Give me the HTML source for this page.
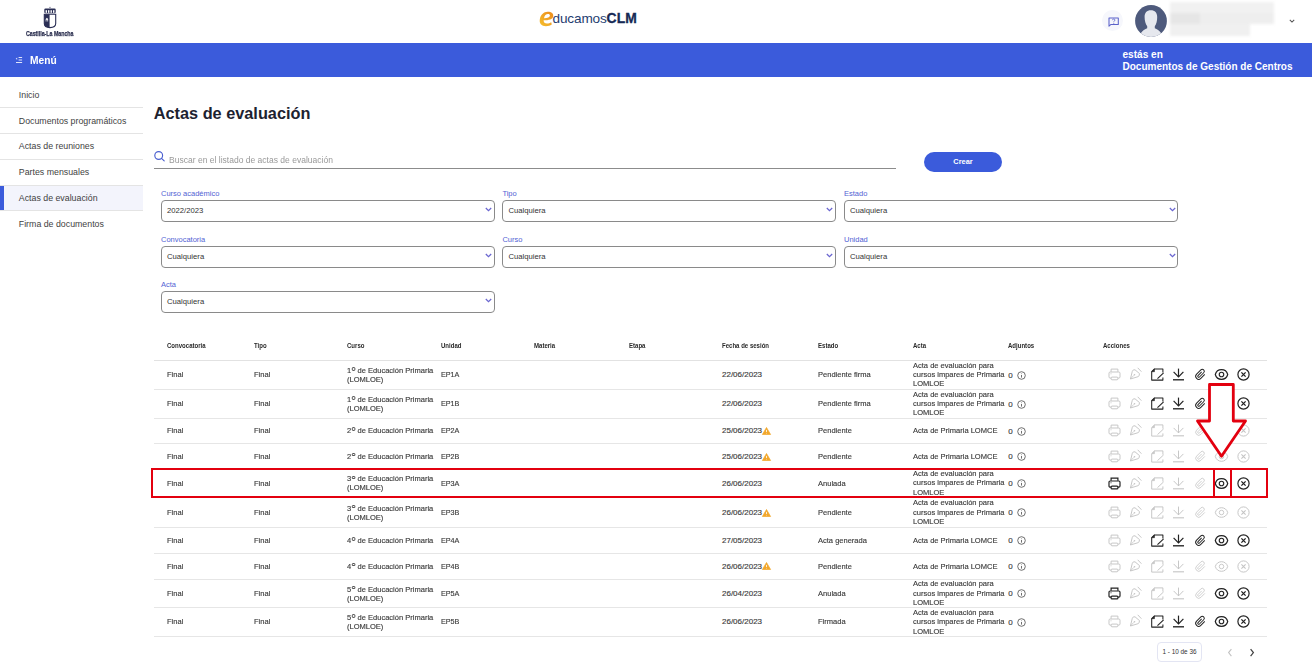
<!DOCTYPE html><html><head><meta charset="utf-8"><style>
*{box-sizing:border-box;margin:0;padding:0}
html,body{width:1312px;height:667px;overflow:hidden;background:#fff;font-family:"Liberation Sans",sans-serif;color:#333}
.t{position:absolute;white-space:nowrap;line-height:20px}
.tb{-webkit-text-stroke:0.12px currentColor}
.a{position:absolute}
svg{position:absolute;overflow:visible}
</style></head><body>
<svg style="left:43px;top:6px" width="14" height="23" viewBox="0 0 14 23">
<path d="M7 0.6 L7.6 2 L6.4 2 Z" fill="#2b2f55"/>
<rect x="1.3" y="2.6" width="11.4" height="4.6" rx="1.2" fill="#2b2f55"/>
<rect x="2.6" y="4.2" width="1.4" height="2.6" fill="#fff"/><rect x="5" y="4.2" width="1.4" height="2.6" fill="#fff"/><rect x="7.5" y="4.2" width="1.4" height="2.6" fill="#fff"/><rect x="10" y="4.2" width="1.4" height="2.6" fill="#fff"/>
<path d="M1.3 8.3 H12.7 V17.5 Q12.7 21.5 7 21.6 Q1.3 21.5 1.3 17.5 Z" fill="#fff" stroke="#2b2f55" stroke-width="1.1"/>
<path d="M1.3 8.3 H6.6 V21.6 Q1.3 21.5 1.3 17.5 Z" fill="#2b2f55"/>
<path d="M2.7 15.5 V13 L3.9 11.8 L5.1 13 V15.5 H4.4 V13.8 H3.4 V15.5 Z" fill="#fff"/>
</svg>
<div class="t" style="left:26.2px;top:23.6px;font-size:7.8px;font-weight:bold;color:#2a2e4e;transform:scaleX(0.68);transform-origin:0 50%;letter-spacing:-0.05px;-webkit-text-stroke:0.25px #2a2e4e">Castilla-La Mancha</div>
<svg style="left:537.5px;top:10.5px" width="17" height="16" viewBox="0 0 17 16">
<defs><linearGradient id="eg" x1="0" y1="1" x2="1" y2="0"><stop offset="0" stop-color="#f5c02e"/><stop offset="1" stop-color="#ec8a1c"/></linearGradient></defs>
<path fill="url(#eg)" fill-rule="evenodd" d="M9.6 0.8 C13.6 0.8 15.8 2.6 15.2 5.4 C14.6 8.2 11 9.2 5.6 9.3 C5.6 11.6 6.8 12.6 9 12.6 C10.6 12.6 12 12.1 13.2 11.3 L13.8 13.6 C12.2 14.6 10.2 15.2 8 15.2 C3.2 15.2 1.2 12.6 1.8 8.6 C2.5 3.9 5.6 0.8 9.6 0.8 Z M6 7.2 C9.8 7.1 11.6 6.2 11.9 4.8 C12.1 3.7 11.2 3.1 9.9 3.1 C8 3.1 6.6 4.6 6 7.2 Z"/>
</svg>
<div class="t" style="left:552.5px;top:8px;font-size:13.6px;color:#1f3d70;letter-spacing:-0.15px">ducamos<b style="color:#172a55;letter-spacing:0;font-size:13.9px;-webkit-text-stroke:0.3px #172a55">CLM</b></div>
<div class="a" style="left:1102px;top:10px;width:21px;height:21px;border-radius:50%;background:#f6f7fc"></div>
<svg style="left:1107.5px;top:16.5px" width="11" height="10" viewBox="0 0 11 10">
<path d="M1 1 H10.3 V7.4 H3 L1 9.2 Z" fill="none" stroke="#5b62c9" stroke-width="1.05" stroke-linejoin="round"/>
<path d="M4.4 3.2 C4.4 2.4 5 2.0 5.7 2.0 C6.4 2.0 7 2.4 7 3.1 C7 3.8 6.2 4.0 5.8 4.5 V5.1" fill="none" stroke="#5b62c9" stroke-width="0.8"/>
<circle cx="5.8" cy="6.2" r="0.5" fill="#5b62c9"/>
</svg>
<svg style="left:1134.7px;top:4.6px" width="32" height="32" viewBox="0 0 32 32">
<defs><clipPath id="av"><circle cx="16" cy="16" r="15.9"/></clipPath></defs>
<circle cx="16" cy="16" r="15.9" fill="#4e5a7c"/>
<g clip-path="url(#av)"><path d="M15.8 5.3 C11.8 5.3 9.6 8 9.6 12 C9.6 15.6 10.6 19.2 12.2 21.2 V23.2 C10.2 24 7.6 25.4 5.6 28.4 C7.4 31.4 11 33 16 33 C21 33 24.6 31.4 26.4 28.4 C24.4 25.4 21.8 24 19.8 23.2 V21.2 C21.4 19.2 22.2 15.6 22.2 12 C22.2 8 20 5.3 15.8 5.3 Z" fill="#e6e8ee"/></g>
</svg>
<div class="a" style="left:1170px;top:2px;width:105px;height:34px;filter:blur(1.5px)"><div class="a" style="left:0;top:0;width:104px;height:11px;background:#f1f1f1"></div><div class="a" style="left:0;top:11px;width:104px;height:11px;background:#eeeeee"></div><div class="a" style="left:0;top:11px;width:30px;height:11px;background:#e6e6e6"></div><div class="a" style="left:0;top:22px;width:80px;height:12px;background:#f0f0f0"></div></div>
<svg style="left:1289px;top:19px" width="6" height="4" viewBox="0 0 6 4"><path d="M0.8 0.8 L3 3 L5.2 0.8" fill="none" stroke="#555" stroke-width="1.05"/></svg>
<div class="a" style="left:0;top:43px;width:1312px;height:34px;background:#3b5bdb"></div>
<svg style="left:15px;top:56px" width="8" height="8" viewBox="0 0 8 8">
<path d="M3.6 1.4 H7.1 M3.6 3.9 H7.1 M1 6.5 H7.1" stroke="#dfe4fb" stroke-width="1.05"/>
<path d="M2.2 1.6 L0.7 2.65 L2.2 3.7 Z" fill="#dfe4fb"/>
</svg>
<div class="t" style="left:29.5px;top:50.00px;font-size:10.6px;font-weight:bold;color:#fff;transform:scaleX(0.965);transform-origin:0 50%;">Menú</div>
<div class="t" style="left:1122.5px;top:44.50px;font-size:10.1px;font-weight:bold;color:#fff;">estás en</div>
<div class="t" style="left:1122.5px;top:57.40px;font-size:10px;font-weight:bold;color:#fff;">Documentos de Gestión de Centros</div>
<div class="a" style="left:0;top:185px;width:143px;height:25.4px;background:#f3f4fc"></div>
<div class="a" style="left:0;top:185px;width:3.6px;height:25.6px;background:#3b5bdb"></div>
<div class="a" style="left:0;top:107.1px;width:143px;height:1px;background:#e4e4e4"></div>
<div class="a" style="left:0;top:133.1px;width:143px;height:1px;background:#e4e4e4"></div>
<div class="a" style="left:0;top:159.1px;width:143px;height:1px;background:#e4e4e4"></div>
<div class="a" style="left:0;top:185px;width:143px;height:1px;background:#e4e4e4"></div>
<div class="a" style="left:0;top:210.4px;width:143px;height:1px;background:#e4e4e4"></div>
<div class="t" style="left:18.8px;top:84.50px;font-size:8.8px;font-weight:normal;color:#3f3f3f;">Inicio</div>
<div class="t" style="left:18.8px;top:110.70px;font-size:8.8px;font-weight:normal;color:#3f3f3f;">Documentos programáticos</div>
<div class="t" style="left:18.8px;top:136.20px;font-size:8.8px;font-weight:normal;color:#3f3f3f;">Actas de reuniones</div>
<div class="t" style="left:18.8px;top:162.20px;font-size:8.8px;font-weight:normal;color:#3f3f3f;">Partes mensuales</div>
<div class="t" style="left:18.8px;top:187.90px;font-size:8.8px;font-weight:normal;color:#3f3f3f;">Actas de evaluación</div>
<div class="t" style="left:18.8px;top:213.90px;font-size:8.8px;font-weight:normal;color:#3f3f3f;">Firma de documentos</div>
<div class="t" style="left:153.8px;top:103.10px;font-size:16.3px;font-weight:bold;color:#1d2230;">Actas de evaluación</div>
<svg style="left:154.3px;top:150.8px" width="11" height="11" viewBox="0 0 11 11">
<circle cx="4.7" cy="4.5" r="3.9" fill="none" stroke="#4a5fd0" stroke-width="1.15"/>
<path d="M7.5 7.3 L10.2 9.9" stroke="#4a5fd0" stroke-width="1.15" stroke-linecap="round"/>
</svg>
<div class="t" style="left:168.8px;top:150.00px;font-size:9px;font-weight:normal;color:#999999;transform:scaleX(0.947);transform-origin:0 50%;">Buscar en el listado de actas de evaluación</div>
<div class="a" style="left:154px;top:168px;width:742px;height:1px;background:#8c8c8c"></div>
<div class="a" style="left:924px;top:152px;width:78px;height:19.5px;border-radius:10px;background:#3b5bdb"></div>
<div class="t" style="left:924px;width:78px;text-align:center;top:152.2px;font-size:7.4px;font-weight:bold;color:#fff">Crear</div>
<div class="t" style="left:161px;top:183.90px;font-size:7.5px;font-weight:normal;color:#5262d4;">Curso académico</div>
<div class="a" style="left:161px;top:200px;width:333.5px;height:22.0px;border:1px solid #8a8a8a;border-radius:4px"></div>
<div class="t" style="left:167px;top:201.00px;font-size:7.7px;font-weight:normal;color:#333333;">2022/2023</div>
<svg style="left:484.9px;top:207.0px" width="7" height="5" viewBox="0 0 7 5"><path d="M0.8 1 L3.5 3.6 L6.2 1" fill="none" stroke="#6a66d0" stroke-width="1.25"/></svg>
<div class="t" style="left:502.4px;top:183.90px;font-size:7.5px;font-weight:normal;color:#5262d4;">Tipo</div>
<div class="a" style="left:502.4px;top:200px;width:333.6px;height:22.0px;border:1px solid #8a8a8a;border-radius:4px"></div>
<div class="t" style="left:508.4px;top:201.00px;font-size:7.7px;font-weight:normal;color:#333333;">Cualquiera</div>
<svg style="left:826.4px;top:207.0px" width="7" height="5" viewBox="0 0 7 5"><path d="M0.8 1 L3.5 3.6 L6.2 1" fill="none" stroke="#6a66d0" stroke-width="1.25"/></svg>
<div class="t" style="left:844px;top:183.90px;font-size:7.5px;font-weight:normal;color:#5262d4;">Estado</div>
<div class="a" style="left:844px;top:200px;width:334.3px;height:22.0px;border:1px solid #8a8a8a;border-radius:4px"></div>
<div class="t" style="left:850px;top:201.00px;font-size:7.7px;font-weight:normal;color:#333333;">Cualquiera</div>
<svg style="left:1168.7px;top:207.0px" width="7" height="5" viewBox="0 0 7 5"><path d="M0.8 1 L3.5 3.6 L6.2 1" fill="none" stroke="#6a66d0" stroke-width="1.25"/></svg>
<div class="t" style="left:161px;top:229.50px;font-size:7.5px;font-weight:normal;color:#5262d4;">Convocatoria</div>
<div class="a" style="left:161px;top:246px;width:333.5px;height:22.0px;border:1px solid #8a8a8a;border-radius:4px"></div>
<div class="t" style="left:167px;top:247.00px;font-size:7.7px;font-weight:normal;color:#333333;">Cualquiera</div>
<svg style="left:484.9px;top:253.0px" width="7" height="5" viewBox="0 0 7 5"><path d="M0.8 1 L3.5 3.6 L6.2 1" fill="none" stroke="#6a66d0" stroke-width="1.25"/></svg>
<div class="t" style="left:502.4px;top:229.50px;font-size:7.5px;font-weight:normal;color:#5262d4;">Curso</div>
<div class="a" style="left:502.4px;top:246px;width:333.6px;height:22.0px;border:1px solid #8a8a8a;border-radius:4px"></div>
<div class="t" style="left:508.4px;top:247.00px;font-size:7.7px;font-weight:normal;color:#333333;">Cualquiera</div>
<svg style="left:826.4px;top:253.0px" width="7" height="5" viewBox="0 0 7 5"><path d="M0.8 1 L3.5 3.6 L6.2 1" fill="none" stroke="#6a66d0" stroke-width="1.25"/></svg>
<div class="t" style="left:844px;top:229.50px;font-size:7.5px;font-weight:normal;color:#5262d4;">Unidad</div>
<div class="a" style="left:844px;top:246px;width:334.3px;height:22.0px;border:1px solid #8a8a8a;border-radius:4px"></div>
<div class="t" style="left:850px;top:247.00px;font-size:7.7px;font-weight:normal;color:#333333;">Cualquiera</div>
<svg style="left:1168.7px;top:253.0px" width="7" height="5" viewBox="0 0 7 5"><path d="M0.8 1 L3.5 3.6 L6.2 1" fill="none" stroke="#6a66d0" stroke-width="1.25"/></svg>
<div class="t" style="left:161px;top:274.60px;font-size:7.5px;font-weight:normal;color:#5262d4;">Acta</div>
<div class="a" style="left:161px;top:291px;width:333.5px;height:22.0px;border:1px solid #8a8a8a;border-radius:4px"></div>
<div class="t" style="left:167px;top:292.00px;font-size:7.7px;font-weight:normal;color:#333333;">Cualquiera</div>
<svg style="left:484.9px;top:298.0px" width="7" height="5" viewBox="0 0 7 5"><path d="M0.8 1 L3.5 3.6 L6.2 1" fill="none" stroke="#6a66d0" stroke-width="1.25"/></svg>
<div class="t" style="left:166.5px;top:336.10px;font-size:6.5px;font-weight:bold;color:#2a2a2a;transform:scaleX(0.93);transform-origin:0 50%;">Convocatoria</div>
<div class="t" style="left:254px;top:336.10px;font-size:6.5px;font-weight:bold;color:#2a2a2a;transform:scaleX(0.93);transform-origin:0 50%;">Tipo</div>
<div class="t" style="left:346.6px;top:336.10px;font-size:6.5px;font-weight:bold;color:#2a2a2a;transform:scaleX(0.93);transform-origin:0 50%;">Curso</div>
<div class="t" style="left:441.3px;top:336.10px;font-size:6.5px;font-weight:bold;color:#2a2a2a;transform:scaleX(0.93);transform-origin:0 50%;">Unidad</div>
<div class="t" style="left:534px;top:336.10px;font-size:6.5px;font-weight:bold;color:#2a2a2a;transform:scaleX(0.93);transform-origin:0 50%;">Materia</div>
<div class="t" style="left:629.3px;top:336.10px;font-size:6.5px;font-weight:bold;color:#2a2a2a;transform:scaleX(0.93);transform-origin:0 50%;">Etapa</div>
<div class="t" style="left:722px;top:336.10px;font-size:6.5px;font-weight:bold;color:#2a2a2a;transform:scaleX(0.93);transform-origin:0 50%;">Fecha de sesión</div>
<div class="t" style="left:818px;top:336.10px;font-size:6.5px;font-weight:bold;color:#2a2a2a;transform:scaleX(0.93);transform-origin:0 50%;">Estado</div>
<div class="t" style="left:912.7px;top:336.10px;font-size:6.5px;font-weight:bold;color:#2a2a2a;transform:scaleX(0.93);transform-origin:0 50%;">Acta</div>
<div class="t" style="left:1008px;top:336.10px;font-size:6.5px;font-weight:bold;color:#2a2a2a;transform:scaleX(0.93);transform-origin:0 50%;">Adjuntos</div>
<div class="t" style="left:1103px;top:336.10px;font-size:6.5px;font-weight:bold;color:#2a2a2a;transform:scaleX(0.93);transform-origin:0 50%;">Acciones</div>
<div class="a" style="left:154px;top:360px;width:1113px;height:1px;background:#e2e2e2"></div>
<div class="a" style="left:154px;top:389.2px;width:1113px;height:1px;background:#e6e6e6"></div>
<div class="t" style="left:166.5px;top:365.20px;font-size:8px;font-weight:normal;color:#3c3c3c;transform:scaleX(0.94);transform-origin:0 50%;-webkit-text-stroke:0.15px #3c3c3c;">Final</div>
<div class="t" style="left:254px;top:365.20px;font-size:8px;font-weight:normal;color:#3c3c3c;transform:scaleX(0.94);transform-origin:0 50%;-webkit-text-stroke:0.15px #3c3c3c;">Final</div>
<div class="t" style="left:346.6px;top:366.0px;line-height:9.1px;font-size:8px;color:#3c3c3c;-webkit-text-stroke:0.15px #3c3c3c;transform:scaleX(0.94);transform-origin:0 50%">1<span style="display:inline-block;width:3.9px;height:3.6px;border:0.8px solid #555;border-radius:50%;vertical-align:2.3px;margin:0 0.2px 0 0.5px"></span> de Educación Primaria<br>(LOMLOE)</div>
<div class="t" style="left:441.3px;top:365.20px;font-size:8px;font-weight:normal;color:#3c3c3c;transform:scaleX(0.9);transform-origin:0 50%;-webkit-text-stroke:0.15px #3c3c3c;">EP1A</div>
<div class="t" style="left:722px;top:365.20px;font-size:8px;font-weight:normal;color:#3c3c3c;-webkit-text-stroke:0.15px #3c3c3c;">22/06/2023</div>
<div class="t" style="left:818px;top:365.20px;font-size:8px;font-weight:normal;color:#3c3c3c;transform:scaleX(0.94);transform-origin:0 50%;-webkit-text-stroke:0.15px #3c3c3c;">Pendiente firma</div>
<div class="t" style="left:913px;top:360.8px;line-height:9.3px;font-size:8px;color:#3c3c3c;-webkit-text-stroke:0.15px #3c3c3c;transform:scaleX(0.94);transform-origin:0 50%">Acta de evaluación para<br>cursos impares de Primaria<br>LOMLOE</div>
<div class="t" style="left:1008.3px;top:365.50px;font-size:8px;font-weight:normal;color:#3c3c3c;-webkit-text-stroke:0.15px #3c3c3c;">0</div>
<svg style="left:1016.9px;top:370.6px" width="9" height="9" viewBox="0 0 9 9"><circle cx="4.5" cy="4.5" r="3.8" fill="none" stroke="#555" stroke-width="0.85"/><path d="M4.5 3.9 V6.6" stroke="#555" stroke-width="0.85"/><circle cx="4.5" cy="2.6" r="0.45" fill="#555"/></svg>
<svg style="left:1107.50px;top:368.10px" width="13" height="13" viewBox="0 0 13 13"><path d="M3.1 3.8 V1.1 H9.9 V3.8" fill="none" stroke="#c4c4c4" stroke-width="0.95"/><rect x="1" y="4" width="11" height="6.1" rx="1.2" fill="none" stroke="#c4c4c4" stroke-width="0.95"/><rect x="3.1" y="9.1" width="6.8" height="2.7" rx="0.9" fill="#fff" stroke="#c4c4c4" stroke-width="0.95"/><circle cx="3" cy="5.8" r="0.55" fill="#c4c4c4"/></svg>
<svg style="left:1129.40px;top:368.10px" width="13" height="13" viewBox="0 0 13 13"><path d="M1.4 11 L3.3 3.3 Q3.6 2.1 4.8 1.9 L6 1.8 L10.5 5.6 L10.2 7.4 Q10 8.2 9 8.7 Z" fill="none" stroke="#c4c4c4" stroke-width="0.95" stroke-linejoin="round"/><path d="M1.6 10.8 L4.9 7.3" stroke="#c4c4c4" stroke-width="0.76"/><circle cx="5.5" cy="6.7" r="0.8" fill="#c4c4c4"/><path d="M8.7 -0.2 L12.4 3.7" stroke="#c4c4c4" stroke-width="0.95"/></svg>
<svg style="left:1151.20px;top:368.10px" width="13" height="13" viewBox="0 0 13 13"><path d="M11.9 4.6 V0.9 H3.5 L0.7 3.7 V12.1 H11.9 V9.4" fill="none" stroke="#222" stroke-width="1.05" stroke-linejoin="round"/><path d="M0.7 3.7 L3.5 0.9 V3.7 Z" fill="#222" stroke="#222" stroke-width="0.5"/><path d="M6.5 10.6 L12.6 4.9" stroke="#222" stroke-width="1.05"/></svg>
<svg style="left:1172.00px;top:368.10px" width="13" height="13" viewBox="0 0 13 13"><path d="M6.5 0.6 V9" stroke="#222" stroke-width="1.2"/><path d="M1.6 3.9 L6.5 8.9 L11.4 3.9" fill="none" stroke="#222" stroke-width="1.2"/><path d="M1 11.8 H12" stroke="#222" stroke-width="1.3499999999999999"/></svg>
<svg style="left:1193.50px;top:368.10px" width="13" height="13" viewBox="0 0 13 13"><g transform="rotate(45 6.5 6.5)"><path d="M9.5 3.8 V9 A3 3 0 0 1 3.5 9 V3 A2 2 0 0 1 7.5 3 V9 A1 1 0 0 1 5.5 9 V4.2" fill="none" stroke="#222" stroke-width="0.96" stroke-linecap="round"/></g></svg>
<svg style="left:1215.05px;top:368.10px" width="13" height="13" viewBox="0 0 13 13"><path d="M0.3 6.5 C2 0.1 11 0.1 12.7 6.5 C11 12.9 2 12.9 0.3 6.5 Z" fill="none" stroke="#222" stroke-width="1.2"/><circle cx="6.5" cy="6.5" r="2.25" fill="none" stroke="#222" stroke-width="1.14"/></svg>
<svg style="left:1236.80px;top:368.10px" width="13" height="13" viewBox="0 0 13 13"><circle cx="6.5" cy="6.5" r="5.6" fill="none" stroke="#222" stroke-width="1.2"/><path d="M4.4 4.4 L8.6 8.6 M8.6 4.4 L4.4 8.6" stroke="#222" stroke-width="1.3"/></svg>
<div class="a" style="left:154px;top:418.0px;width:1113px;height:1px;background:#e6e6e6"></div>
<div class="t" style="left:166.5px;top:394.20px;font-size:8px;font-weight:normal;color:#3c3c3c;transform:scaleX(0.94);transform-origin:0 50%;-webkit-text-stroke:0.15px #3c3c3c;">Final</div>
<div class="t" style="left:254px;top:394.20px;font-size:8px;font-weight:normal;color:#3c3c3c;transform:scaleX(0.94);transform-origin:0 50%;-webkit-text-stroke:0.15px #3c3c3c;">Final</div>
<div class="t" style="left:346.6px;top:395.0px;line-height:9.1px;font-size:8px;color:#3c3c3c;-webkit-text-stroke:0.15px #3c3c3c;transform:scaleX(0.94);transform-origin:0 50%">1<span style="display:inline-block;width:3.9px;height:3.6px;border:0.8px solid #555;border-radius:50%;vertical-align:2.3px;margin:0 0.2px 0 0.5px"></span> de Educación Primaria<br>(LOMLOE)</div>
<div class="t" style="left:441.3px;top:394.20px;font-size:8px;font-weight:normal;color:#3c3c3c;transform:scaleX(0.9);transform-origin:0 50%;-webkit-text-stroke:0.15px #3c3c3c;">EP1B</div>
<div class="t" style="left:722px;top:394.20px;font-size:8px;font-weight:normal;color:#3c3c3c;-webkit-text-stroke:0.15px #3c3c3c;">22/06/2023</div>
<div class="t" style="left:818px;top:394.20px;font-size:8px;font-weight:normal;color:#3c3c3c;transform:scaleX(0.94);transform-origin:0 50%;-webkit-text-stroke:0.15px #3c3c3c;">Pendiente firma</div>
<div class="t" style="left:913px;top:389.8px;line-height:9.3px;font-size:8px;color:#3c3c3c;-webkit-text-stroke:0.15px #3c3c3c;transform:scaleX(0.94);transform-origin:0 50%">Acta de evaluación para<br>cursos impares de Primaria<br>LOMLOE</div>
<div class="t" style="left:1008.3px;top:394.50px;font-size:8px;font-weight:normal;color:#3c3c3c;-webkit-text-stroke:0.15px #3c3c3c;">0</div>
<svg style="left:1016.9px;top:399.6px" width="9" height="9" viewBox="0 0 9 9"><circle cx="4.5" cy="4.5" r="3.8" fill="none" stroke="#555" stroke-width="0.85"/><path d="M4.5 3.9 V6.6" stroke="#555" stroke-width="0.85"/><circle cx="4.5" cy="2.6" r="0.45" fill="#555"/></svg>
<svg style="left:1107.50px;top:397.10px" width="13" height="13" viewBox="0 0 13 13"><path d="M3.1 3.8 V1.1 H9.9 V3.8" fill="none" stroke="#c4c4c4" stroke-width="0.95"/><rect x="1" y="4" width="11" height="6.1" rx="1.2" fill="none" stroke="#c4c4c4" stroke-width="0.95"/><rect x="3.1" y="9.1" width="6.8" height="2.7" rx="0.9" fill="#fff" stroke="#c4c4c4" stroke-width="0.95"/><circle cx="3" cy="5.8" r="0.55" fill="#c4c4c4"/></svg>
<svg style="left:1129.40px;top:397.10px" width="13" height="13" viewBox="0 0 13 13"><path d="M1.4 11 L3.3 3.3 Q3.6 2.1 4.8 1.9 L6 1.8 L10.5 5.6 L10.2 7.4 Q10 8.2 9 8.7 Z" fill="none" stroke="#c4c4c4" stroke-width="0.95" stroke-linejoin="round"/><path d="M1.6 10.8 L4.9 7.3" stroke="#c4c4c4" stroke-width="0.76"/><circle cx="5.5" cy="6.7" r="0.8" fill="#c4c4c4"/><path d="M8.7 -0.2 L12.4 3.7" stroke="#c4c4c4" stroke-width="0.95"/></svg>
<svg style="left:1151.20px;top:397.10px" width="13" height="13" viewBox="0 0 13 13"><path d="M11.9 4.6 V0.9 H3.5 L0.7 3.7 V12.1 H11.9 V9.4" fill="none" stroke="#222" stroke-width="1.05" stroke-linejoin="round"/><path d="M0.7 3.7 L3.5 0.9 V3.7 Z" fill="#222" stroke="#222" stroke-width="0.5"/><path d="M6.5 10.6 L12.6 4.9" stroke="#222" stroke-width="1.05"/></svg>
<svg style="left:1172.00px;top:397.10px" width="13" height="13" viewBox="0 0 13 13"><path d="M6.5 0.6 V9" stroke="#222" stroke-width="1.2"/><path d="M1.6 3.9 L6.5 8.9 L11.4 3.9" fill="none" stroke="#222" stroke-width="1.2"/><path d="M1 11.8 H12" stroke="#222" stroke-width="1.3499999999999999"/></svg>
<svg style="left:1193.50px;top:397.10px" width="13" height="13" viewBox="0 0 13 13"><g transform="rotate(45 6.5 6.5)"><path d="M9.5 3.8 V9 A3 3 0 0 1 3.5 9 V3 A2 2 0 0 1 7.5 3 V9 A1 1 0 0 1 5.5 9 V4.2" fill="none" stroke="#222" stroke-width="0.96" stroke-linecap="round"/></g></svg>
<svg style="left:1215.05px;top:397.10px" width="13" height="13" viewBox="0 0 13 13"><path d="M0.3 6.5 C2 0.1 11 0.1 12.7 6.5 C11 12.9 2 12.9 0.3 6.5 Z" fill="none" stroke="#222" stroke-width="1.2"/><circle cx="6.5" cy="6.5" r="2.25" fill="none" stroke="#222" stroke-width="1.14"/></svg>
<svg style="left:1236.80px;top:397.10px" width="13" height="13" viewBox="0 0 13 13"><circle cx="6.5" cy="6.5" r="5.6" fill="none" stroke="#222" stroke-width="1.2"/><path d="M4.4 4.4 L8.6 8.6 M8.6 4.4 L4.4 8.6" stroke="#222" stroke-width="1.3"/></svg>
<div class="a" style="left:154px;top:443.4px;width:1113px;height:1px;background:#e6e6e6"></div>
<div class="t" style="left:166.5px;top:421.30px;font-size:8px;font-weight:normal;color:#3c3c3c;transform:scaleX(0.94);transform-origin:0 50%;-webkit-text-stroke:0.15px #3c3c3c;">Final</div>
<div class="t" style="left:254px;top:421.30px;font-size:8px;font-weight:normal;color:#3c3c3c;transform:scaleX(0.94);transform-origin:0 50%;-webkit-text-stroke:0.15px #3c3c3c;">Final</div>
<div class="t" style="left:346.6px;top:421.30px;font-size:8px;font-weight:normal;color:#3c3c3c;transform:scaleX(0.94);transform-origin:0 50%;-webkit-text-stroke:0.15px #3c3c3c;">2<span style="display:inline-block;width:3.9px;height:3.6px;border:0.8px solid #555;border-radius:50%;vertical-align:2.3px;margin:0 0.2px 0 0.5px"></span> de Educación Primaria</div>
<div class="t" style="left:441.3px;top:421.30px;font-size:8px;font-weight:normal;color:#3c3c3c;transform:scaleX(0.9);transform-origin:0 50%;-webkit-text-stroke:0.15px #3c3c3c;">EP2A</div>
<div class="t" style="left:722px;top:421.30px;font-size:8px;font-weight:normal;color:#3c3c3c;-webkit-text-stroke:0.15px #3c3c3c;">25/06/2023</div>
<svg style="left:762.3px;top:427.1px" width="9" height="8" viewBox="0 0 9 8"><path d="M4.5 0.5 L8.6 7.5 H0.4 Z" fill="#f2a72b" stroke="#f2a72b" stroke-width="0.7" stroke-linejoin="round"/><path d="M4.5 2.9 V5.1" stroke="#fff" stroke-width="0.8"/><circle cx="4.5" cy="6.2" r="0.4" fill="#fff"/></svg>
<div class="t" style="left:818px;top:421.30px;font-size:8px;font-weight:normal;color:#3c3c3c;transform:scaleX(0.94);transform-origin:0 50%;-webkit-text-stroke:0.15px #3c3c3c;">Pendiente</div>
<div class="t" style="left:913px;top:421.30px;font-size:8px;font-weight:normal;color:#3c3c3c;transform:scaleX(0.94);transform-origin:0 50%;-webkit-text-stroke:0.15px #3c3c3c;">Acta de Primaria LOMCE</div>
<div class="t" style="left:1008.3px;top:421.60px;font-size:8px;font-weight:normal;color:#3c3c3c;-webkit-text-stroke:0.15px #3c3c3c;">0</div>
<svg style="left:1016.9px;top:426.7px" width="9" height="9" viewBox="0 0 9 9"><circle cx="4.5" cy="4.5" r="3.8" fill="none" stroke="#555" stroke-width="0.85"/><path d="M4.5 3.9 V6.6" stroke="#555" stroke-width="0.85"/><circle cx="4.5" cy="2.6" r="0.45" fill="#555"/></svg>
<svg style="left:1107.50px;top:424.20px" width="13" height="13" viewBox="0 0 13 13"><path d="M3.1 3.8 V1.1 H9.9 V3.8" fill="none" stroke="#c4c4c4" stroke-width="0.95"/><rect x="1" y="4" width="11" height="6.1" rx="1.2" fill="none" stroke="#c4c4c4" stroke-width="0.95"/><rect x="3.1" y="9.1" width="6.8" height="2.7" rx="0.9" fill="#fff" stroke="#c4c4c4" stroke-width="0.95"/><circle cx="3" cy="5.8" r="0.55" fill="#c4c4c4"/></svg>
<svg style="left:1129.40px;top:424.20px" width="13" height="13" viewBox="0 0 13 13"><path d="M1.4 11 L3.3 3.3 Q3.6 2.1 4.8 1.9 L6 1.8 L10.5 5.6 L10.2 7.4 Q10 8.2 9 8.7 Z" fill="none" stroke="#c4c4c4" stroke-width="0.95" stroke-linejoin="round"/><path d="M1.6 10.8 L4.9 7.3" stroke="#c4c4c4" stroke-width="0.76"/><circle cx="5.5" cy="6.7" r="0.8" fill="#c4c4c4"/><path d="M8.7 -0.2 L12.4 3.7" stroke="#c4c4c4" stroke-width="0.95"/></svg>
<svg style="left:1151.20px;top:424.20px" width="13" height="13" viewBox="0 0 13 13"><path d="M11.9 4.6 V0.9 H3.5 L0.7 3.7 V12.1 H11.9 V9.4" fill="none" stroke="#c4c4c4" stroke-width="0.95" stroke-linejoin="round"/><path d="M0.7 3.7 L3.5 0.9 V3.7 Z" fill="#c4c4c4" stroke="#c4c4c4" stroke-width="0.5"/><path d="M6.5 10.6 L12.6 4.9" stroke="#c4c4c4" stroke-width="0.95"/></svg>
<svg style="left:1172.00px;top:424.20px" width="13" height="13" viewBox="0 0 13 13"><path d="M6.5 0.6 V9" stroke="#c4c4c4" stroke-width="0.95"/><path d="M1.6 3.9 L6.5 8.9 L11.4 3.9" fill="none" stroke="#c4c4c4" stroke-width="0.95"/><path d="M1 11.8 H12" stroke="#c4c4c4" stroke-width="1.0999999999999999"/></svg>
<svg style="left:1193.50px;top:424.20px" width="13" height="13" viewBox="0 0 13 13"><g transform="rotate(45 6.5 6.5)"><path d="M9.5 3.8 V9 A3 3 0 0 1 3.5 9 V3 A2 2 0 0 1 7.5 3 V9 A1 1 0 0 1 5.5 9 V4.2" fill="none" stroke="#c4c4c4" stroke-width="0.76" stroke-linecap="round"/></g></svg>
<svg style="left:1215.05px;top:424.20px" width="13" height="13" viewBox="0 0 13 13"><path d="M0.3 6.5 C2 0.1 11 0.1 12.7 6.5 C11 12.9 2 12.9 0.3 6.5 Z" fill="none" stroke="#c4c4c4" stroke-width="0.95"/><circle cx="6.5" cy="6.5" r="2.25" fill="none" stroke="#c4c4c4" stroke-width="0.9025"/></svg>
<svg style="left:1236.80px;top:424.20px" width="13" height="13" viewBox="0 0 13 13"><circle cx="6.5" cy="6.5" r="5.6" fill="none" stroke="#c4c4c4" stroke-width="0.95"/><path d="M4.4 4.4 L8.6 8.6 M8.6 4.4 L4.4 8.6" stroke="#c4c4c4" stroke-width="1.05"/></svg>
<div class="a" style="left:154px;top:468.8px;width:1113px;height:1px;background:#e6e6e6"></div>
<div class="t" style="left:166.5px;top:446.70px;font-size:8px;font-weight:normal;color:#3c3c3c;transform:scaleX(0.94);transform-origin:0 50%;-webkit-text-stroke:0.15px #3c3c3c;">Final</div>
<div class="t" style="left:254px;top:446.70px;font-size:8px;font-weight:normal;color:#3c3c3c;transform:scaleX(0.94);transform-origin:0 50%;-webkit-text-stroke:0.15px #3c3c3c;">Final</div>
<div class="t" style="left:346.6px;top:446.70px;font-size:8px;font-weight:normal;color:#3c3c3c;transform:scaleX(0.94);transform-origin:0 50%;-webkit-text-stroke:0.15px #3c3c3c;">2<span style="display:inline-block;width:3.9px;height:3.6px;border:0.8px solid #555;border-radius:50%;vertical-align:2.3px;margin:0 0.2px 0 0.5px"></span> de Educación Primaria</div>
<div class="t" style="left:441.3px;top:446.70px;font-size:8px;font-weight:normal;color:#3c3c3c;transform:scaleX(0.9);transform-origin:0 50%;-webkit-text-stroke:0.15px #3c3c3c;">EP2B</div>
<div class="t" style="left:722px;top:446.70px;font-size:8px;font-weight:normal;color:#3c3c3c;-webkit-text-stroke:0.15px #3c3c3c;">25/06/2023</div>
<svg style="left:762.3px;top:452.5px" width="9" height="8" viewBox="0 0 9 8"><path d="M4.5 0.5 L8.6 7.5 H0.4 Z" fill="#f2a72b" stroke="#f2a72b" stroke-width="0.7" stroke-linejoin="round"/><path d="M4.5 2.9 V5.1" stroke="#fff" stroke-width="0.8"/><circle cx="4.5" cy="6.2" r="0.4" fill="#fff"/></svg>
<div class="t" style="left:818px;top:446.70px;font-size:8px;font-weight:normal;color:#3c3c3c;transform:scaleX(0.94);transform-origin:0 50%;-webkit-text-stroke:0.15px #3c3c3c;">Pendiente</div>
<div class="t" style="left:913px;top:446.70px;font-size:8px;font-weight:normal;color:#3c3c3c;transform:scaleX(0.94);transform-origin:0 50%;-webkit-text-stroke:0.15px #3c3c3c;">Acta de Primaria LOMCE</div>
<div class="t" style="left:1008.3px;top:447.00px;font-size:8px;font-weight:normal;color:#3c3c3c;-webkit-text-stroke:0.15px #3c3c3c;">0</div>
<svg style="left:1016.9px;top:452.1px" width="9" height="9" viewBox="0 0 9 9"><circle cx="4.5" cy="4.5" r="3.8" fill="none" stroke="#555" stroke-width="0.85"/><path d="M4.5 3.9 V6.6" stroke="#555" stroke-width="0.85"/><circle cx="4.5" cy="2.6" r="0.45" fill="#555"/></svg>
<svg style="left:1107.50px;top:449.60px" width="13" height="13" viewBox="0 0 13 13"><path d="M3.1 3.8 V1.1 H9.9 V3.8" fill="none" stroke="#c4c4c4" stroke-width="0.95"/><rect x="1" y="4" width="11" height="6.1" rx="1.2" fill="none" stroke="#c4c4c4" stroke-width="0.95"/><rect x="3.1" y="9.1" width="6.8" height="2.7" rx="0.9" fill="#fff" stroke="#c4c4c4" stroke-width="0.95"/><circle cx="3" cy="5.8" r="0.55" fill="#c4c4c4"/></svg>
<svg style="left:1129.40px;top:449.60px" width="13" height="13" viewBox="0 0 13 13"><path d="M1.4 11 L3.3 3.3 Q3.6 2.1 4.8 1.9 L6 1.8 L10.5 5.6 L10.2 7.4 Q10 8.2 9 8.7 Z" fill="none" stroke="#c4c4c4" stroke-width="0.95" stroke-linejoin="round"/><path d="M1.6 10.8 L4.9 7.3" stroke="#c4c4c4" stroke-width="0.76"/><circle cx="5.5" cy="6.7" r="0.8" fill="#c4c4c4"/><path d="M8.7 -0.2 L12.4 3.7" stroke="#c4c4c4" stroke-width="0.95"/></svg>
<svg style="left:1151.20px;top:449.60px" width="13" height="13" viewBox="0 0 13 13"><path d="M11.9 4.6 V0.9 H3.5 L0.7 3.7 V12.1 H11.9 V9.4" fill="none" stroke="#c4c4c4" stroke-width="0.95" stroke-linejoin="round"/><path d="M0.7 3.7 L3.5 0.9 V3.7 Z" fill="#c4c4c4" stroke="#c4c4c4" stroke-width="0.5"/><path d="M6.5 10.6 L12.6 4.9" stroke="#c4c4c4" stroke-width="0.95"/></svg>
<svg style="left:1172.00px;top:449.60px" width="13" height="13" viewBox="0 0 13 13"><path d="M6.5 0.6 V9" stroke="#c4c4c4" stroke-width="0.95"/><path d="M1.6 3.9 L6.5 8.9 L11.4 3.9" fill="none" stroke="#c4c4c4" stroke-width="0.95"/><path d="M1 11.8 H12" stroke="#c4c4c4" stroke-width="1.0999999999999999"/></svg>
<svg style="left:1193.50px;top:449.60px" width="13" height="13" viewBox="0 0 13 13"><g transform="rotate(45 6.5 6.5)"><path d="M9.5 3.8 V9 A3 3 0 0 1 3.5 9 V3 A2 2 0 0 1 7.5 3 V9 A1 1 0 0 1 5.5 9 V4.2" fill="none" stroke="#c4c4c4" stroke-width="0.76" stroke-linecap="round"/></g></svg>
<svg style="left:1215.05px;top:449.60px" width="13" height="13" viewBox="0 0 13 13"><path d="M0.3 6.5 C2 0.1 11 0.1 12.7 6.5 C11 12.9 2 12.9 0.3 6.5 Z" fill="none" stroke="#c4c4c4" stroke-width="0.95"/><circle cx="6.5" cy="6.5" r="2.25" fill="none" stroke="#c4c4c4" stroke-width="0.9025"/></svg>
<svg style="left:1236.80px;top:449.60px" width="13" height="13" viewBox="0 0 13 13"><circle cx="6.5" cy="6.5" r="5.6" fill="none" stroke="#c4c4c4" stroke-width="0.95"/><path d="M4.4 4.4 L8.6 8.6 M8.6 4.4 L4.4 8.6" stroke="#c4c4c4" stroke-width="1.05"/></svg>
<div class="a" style="left:154px;top:497.2px;width:1113px;height:1px;background:#e6e6e6"></div>
<div class="t" style="left:166.5px;top:473.60px;font-size:8px;font-weight:normal;color:#3c3c3c;transform:scaleX(0.94);transform-origin:0 50%;-webkit-text-stroke:0.15px #3c3c3c;">Final</div>
<div class="t" style="left:254px;top:473.60px;font-size:8px;font-weight:normal;color:#3c3c3c;transform:scaleX(0.94);transform-origin:0 50%;-webkit-text-stroke:0.15px #3c3c3c;">Final</div>
<div class="t" style="left:346.6px;top:474.4px;line-height:9.1px;font-size:8px;color:#3c3c3c;-webkit-text-stroke:0.15px #3c3c3c;transform:scaleX(0.94);transform-origin:0 50%">3<span style="display:inline-block;width:3.9px;height:3.6px;border:0.8px solid #555;border-radius:50%;vertical-align:2.3px;margin:0 0.2px 0 0.5px"></span> de Educación Primaria<br>(LOMLOE)</div>
<div class="t" style="left:441.3px;top:473.60px;font-size:8px;font-weight:normal;color:#3c3c3c;transform:scaleX(0.9);transform-origin:0 50%;-webkit-text-stroke:0.15px #3c3c3c;">EP3A</div>
<div class="t" style="left:722px;top:473.60px;font-size:8px;font-weight:normal;color:#3c3c3c;-webkit-text-stroke:0.15px #3c3c3c;">26/06/2023</div>
<div class="t" style="left:818px;top:473.60px;font-size:8px;font-weight:normal;color:#3c3c3c;transform:scaleX(0.94);transform-origin:0 50%;-webkit-text-stroke:0.15px #3c3c3c;">Anulada</div>
<div class="t" style="left:913px;top:469.2px;line-height:9.3px;font-size:8px;color:#3c3c3c;-webkit-text-stroke:0.15px #3c3c3c;transform:scaleX(0.94);transform-origin:0 50%">Acta de evaluación para<br>cursos impares de Primaria<br>LOMLOE</div>
<div class="t" style="left:1008.3px;top:473.90px;font-size:8px;font-weight:normal;color:#3c3c3c;-webkit-text-stroke:0.15px #3c3c3c;">0</div>
<svg style="left:1016.9px;top:479.0px" width="9" height="9" viewBox="0 0 9 9"><circle cx="4.5" cy="4.5" r="3.8" fill="none" stroke="#555" stroke-width="0.85"/><path d="M4.5 3.9 V6.6" stroke="#555" stroke-width="0.85"/><circle cx="4.5" cy="2.6" r="0.45" fill="#555"/></svg>
<svg style="left:1107.50px;top:476.50px" width="13" height="13" viewBox="0 0 13 13"><path d="M3.1 3.8 V1.1 H9.9 V3.8" fill="none" stroke="#222" stroke-width="1.2"/><rect x="1" y="4" width="11" height="6.1" rx="1.2" fill="none" stroke="#222" stroke-width="1.2"/><rect x="3.1" y="9.1" width="6.8" height="2.7" rx="0.9" fill="#fff" stroke="#222" stroke-width="1.2"/><circle cx="3" cy="5.8" r="0.55" fill="#222"/></svg>
<svg style="left:1129.40px;top:476.50px" width="13" height="13" viewBox="0 0 13 13"><path d="M1.4 11 L3.3 3.3 Q3.6 2.1 4.8 1.9 L6 1.8 L10.5 5.6 L10.2 7.4 Q10 8.2 9 8.7 Z" fill="none" stroke="#c4c4c4" stroke-width="0.95" stroke-linejoin="round"/><path d="M1.6 10.8 L4.9 7.3" stroke="#c4c4c4" stroke-width="0.76"/><circle cx="5.5" cy="6.7" r="0.8" fill="#c4c4c4"/><path d="M8.7 -0.2 L12.4 3.7" stroke="#c4c4c4" stroke-width="0.95"/></svg>
<svg style="left:1151.20px;top:476.50px" width="13" height="13" viewBox="0 0 13 13"><path d="M11.9 4.6 V0.9 H3.5 L0.7 3.7 V12.1 H11.9 V9.4" fill="none" stroke="#c4c4c4" stroke-width="0.95" stroke-linejoin="round"/><path d="M0.7 3.7 L3.5 0.9 V3.7 Z" fill="#c4c4c4" stroke="#c4c4c4" stroke-width="0.5"/><path d="M6.5 10.6 L12.6 4.9" stroke="#c4c4c4" stroke-width="0.95"/></svg>
<svg style="left:1172.00px;top:476.50px" width="13" height="13" viewBox="0 0 13 13"><path d="M6.5 0.6 V9" stroke="#c4c4c4" stroke-width="0.95"/><path d="M1.6 3.9 L6.5 8.9 L11.4 3.9" fill="none" stroke="#c4c4c4" stroke-width="0.95"/><path d="M1 11.8 H12" stroke="#c4c4c4" stroke-width="1.0999999999999999"/></svg>
<svg style="left:1193.50px;top:476.50px" width="13" height="13" viewBox="0 0 13 13"><g transform="rotate(45 6.5 6.5)"><path d="M9.5 3.8 V9 A3 3 0 0 1 3.5 9 V3 A2 2 0 0 1 7.5 3 V9 A1 1 0 0 1 5.5 9 V4.2" fill="none" stroke="#c4c4c4" stroke-width="0.76" stroke-linecap="round"/></g></svg>
<svg style="left:1215.05px;top:476.50px" width="13" height="13" viewBox="0 0 13 13"><path d="M0.3 6.5 C2 0.1 11 0.1 12.7 6.5 C11 12.9 2 12.9 0.3 6.5 Z" fill="none" stroke="#222" stroke-width="1.2"/><circle cx="6.5" cy="6.5" r="2.25" fill="none" stroke="#222" stroke-width="1.14"/></svg>
<svg style="left:1236.80px;top:476.50px" width="13" height="13" viewBox="0 0 13 13"><circle cx="6.5" cy="6.5" r="5.6" fill="none" stroke="#222" stroke-width="1.2"/><path d="M4.4 4.4 L8.6 8.6 M8.6 4.4 L4.4 8.6" stroke="#222" stroke-width="1.3"/></svg>
<div class="a" style="left:154px;top:527.3px;width:1113px;height:1px;background:#e6e6e6"></div>
<div class="t" style="left:166.5px;top:502.85px;font-size:8px;font-weight:normal;color:#3c3c3c;transform:scaleX(0.94);transform-origin:0 50%;-webkit-text-stroke:0.15px #3c3c3c;">Final</div>
<div class="t" style="left:254px;top:502.85px;font-size:8px;font-weight:normal;color:#3c3c3c;transform:scaleX(0.94);transform-origin:0 50%;-webkit-text-stroke:0.15px #3c3c3c;">Final</div>
<div class="t" style="left:346.6px;top:503.6px;line-height:9.1px;font-size:8px;color:#3c3c3c;-webkit-text-stroke:0.15px #3c3c3c;transform:scaleX(0.94);transform-origin:0 50%">3<span style="display:inline-block;width:3.9px;height:3.6px;border:0.8px solid #555;border-radius:50%;vertical-align:2.3px;margin:0 0.2px 0 0.5px"></span> de Educación Primaria<br>(LOMLOE)</div>
<div class="t" style="left:441.3px;top:502.85px;font-size:8px;font-weight:normal;color:#3c3c3c;transform:scaleX(0.9);transform-origin:0 50%;-webkit-text-stroke:0.15px #3c3c3c;">EP3B</div>
<div class="t" style="left:722px;top:502.85px;font-size:8px;font-weight:normal;color:#3c3c3c;-webkit-text-stroke:0.15px #3c3c3c;">26/06/2023</div>
<svg style="left:762.3px;top:508.6px" width="9" height="8" viewBox="0 0 9 8"><path d="M4.5 0.5 L8.6 7.5 H0.4 Z" fill="#f2a72b" stroke="#f2a72b" stroke-width="0.7" stroke-linejoin="round"/><path d="M4.5 2.9 V5.1" stroke="#fff" stroke-width="0.8"/><circle cx="4.5" cy="6.2" r="0.4" fill="#fff"/></svg>
<div class="t" style="left:818px;top:502.85px;font-size:8px;font-weight:normal;color:#3c3c3c;transform:scaleX(0.94);transform-origin:0 50%;-webkit-text-stroke:0.15px #3c3c3c;">Pendiente</div>
<div class="t" style="left:913px;top:498.4px;line-height:9.3px;font-size:8px;color:#3c3c3c;-webkit-text-stroke:0.15px #3c3c3c;transform:scaleX(0.94);transform-origin:0 50%">Acta de evaluación para<br>cursos impares de Primaria<br>LOMLOE</div>
<div class="t" style="left:1008.3px;top:503.15px;font-size:8px;font-weight:normal;color:#3c3c3c;-webkit-text-stroke:0.15px #3c3c3c;">0</div>
<svg style="left:1016.9px;top:508.2px" width="9" height="9" viewBox="0 0 9 9"><circle cx="4.5" cy="4.5" r="3.8" fill="none" stroke="#555" stroke-width="0.85"/><path d="M4.5 3.9 V6.6" stroke="#555" stroke-width="0.85"/><circle cx="4.5" cy="2.6" r="0.45" fill="#555"/></svg>
<svg style="left:1107.50px;top:505.75px" width="13" height="13" viewBox="0 0 13 13"><path d="M3.1 3.8 V1.1 H9.9 V3.8" fill="none" stroke="#c4c4c4" stroke-width="0.95"/><rect x="1" y="4" width="11" height="6.1" rx="1.2" fill="none" stroke="#c4c4c4" stroke-width="0.95"/><rect x="3.1" y="9.1" width="6.8" height="2.7" rx="0.9" fill="#fff" stroke="#c4c4c4" stroke-width="0.95"/><circle cx="3" cy="5.8" r="0.55" fill="#c4c4c4"/></svg>
<svg style="left:1129.40px;top:505.75px" width="13" height="13" viewBox="0 0 13 13"><path d="M1.4 11 L3.3 3.3 Q3.6 2.1 4.8 1.9 L6 1.8 L10.5 5.6 L10.2 7.4 Q10 8.2 9 8.7 Z" fill="none" stroke="#c4c4c4" stroke-width="0.95" stroke-linejoin="round"/><path d="M1.6 10.8 L4.9 7.3" stroke="#c4c4c4" stroke-width="0.76"/><circle cx="5.5" cy="6.7" r="0.8" fill="#c4c4c4"/><path d="M8.7 -0.2 L12.4 3.7" stroke="#c4c4c4" stroke-width="0.95"/></svg>
<svg style="left:1151.20px;top:505.75px" width="13" height="13" viewBox="0 0 13 13"><path d="M11.9 4.6 V0.9 H3.5 L0.7 3.7 V12.1 H11.9 V9.4" fill="none" stroke="#c4c4c4" stroke-width="0.95" stroke-linejoin="round"/><path d="M0.7 3.7 L3.5 0.9 V3.7 Z" fill="#c4c4c4" stroke="#c4c4c4" stroke-width="0.5"/><path d="M6.5 10.6 L12.6 4.9" stroke="#c4c4c4" stroke-width="0.95"/></svg>
<svg style="left:1172.00px;top:505.75px" width="13" height="13" viewBox="0 0 13 13"><path d="M6.5 0.6 V9" stroke="#c4c4c4" stroke-width="0.95"/><path d="M1.6 3.9 L6.5 8.9 L11.4 3.9" fill="none" stroke="#c4c4c4" stroke-width="0.95"/><path d="M1 11.8 H12" stroke="#c4c4c4" stroke-width="1.0999999999999999"/></svg>
<svg style="left:1193.50px;top:505.75px" width="13" height="13" viewBox="0 0 13 13"><g transform="rotate(45 6.5 6.5)"><path d="M9.5 3.8 V9 A3 3 0 0 1 3.5 9 V3 A2 2 0 0 1 7.5 3 V9 A1 1 0 0 1 5.5 9 V4.2" fill="none" stroke="#c4c4c4" stroke-width="0.76" stroke-linecap="round"/></g></svg>
<svg style="left:1215.05px;top:505.75px" width="13" height="13" viewBox="0 0 13 13"><path d="M0.3 6.5 C2 0.1 11 0.1 12.7 6.5 C11 12.9 2 12.9 0.3 6.5 Z" fill="none" stroke="#c4c4c4" stroke-width="0.95"/><circle cx="6.5" cy="6.5" r="2.25" fill="none" stroke="#c4c4c4" stroke-width="0.9025"/></svg>
<svg style="left:1236.80px;top:505.75px" width="13" height="13" viewBox="0 0 13 13"><circle cx="6.5" cy="6.5" r="5.6" fill="none" stroke="#c4c4c4" stroke-width="0.95"/><path d="M4.4 4.4 L8.6 8.6 M8.6 4.4 L4.4 8.6" stroke="#c4c4c4" stroke-width="1.05"/></svg>
<div class="a" style="left:154px;top:553.1px;width:1113px;height:1px;background:#e6e6e6"></div>
<div class="t" style="left:166.5px;top:530.80px;font-size:8px;font-weight:normal;color:#3c3c3c;transform:scaleX(0.94);transform-origin:0 50%;-webkit-text-stroke:0.15px #3c3c3c;">Final</div>
<div class="t" style="left:254px;top:530.80px;font-size:8px;font-weight:normal;color:#3c3c3c;transform:scaleX(0.94);transform-origin:0 50%;-webkit-text-stroke:0.15px #3c3c3c;">Final</div>
<div class="t" style="left:346.6px;top:530.80px;font-size:8px;font-weight:normal;color:#3c3c3c;transform:scaleX(0.94);transform-origin:0 50%;-webkit-text-stroke:0.15px #3c3c3c;">4<span style="display:inline-block;width:3.9px;height:3.6px;border:0.8px solid #555;border-radius:50%;vertical-align:2.3px;margin:0 0.2px 0 0.5px"></span> de Educación Primaria</div>
<div class="t" style="left:441.3px;top:530.80px;font-size:8px;font-weight:normal;color:#3c3c3c;transform:scaleX(0.9);transform-origin:0 50%;-webkit-text-stroke:0.15px #3c3c3c;">EP4A</div>
<div class="t" style="left:722px;top:530.80px;font-size:8px;font-weight:normal;color:#3c3c3c;-webkit-text-stroke:0.15px #3c3c3c;">27/05/2023</div>
<div class="t" style="left:818px;top:530.80px;font-size:8px;font-weight:normal;color:#3c3c3c;transform:scaleX(0.94);transform-origin:0 50%;-webkit-text-stroke:0.15px #3c3c3c;">Acta generada</div>
<div class="t" style="left:913px;top:530.80px;font-size:8px;font-weight:normal;color:#3c3c3c;transform:scaleX(0.94);transform-origin:0 50%;-webkit-text-stroke:0.15px #3c3c3c;">Acta de Primaria LOMCE</div>
<div class="t" style="left:1008.3px;top:531.10px;font-size:8px;font-weight:normal;color:#3c3c3c;-webkit-text-stroke:0.15px #3c3c3c;">0</div>
<svg style="left:1016.9px;top:536.2px" width="9" height="9" viewBox="0 0 9 9"><circle cx="4.5" cy="4.5" r="3.8" fill="none" stroke="#555" stroke-width="0.85"/><path d="M4.5 3.9 V6.6" stroke="#555" stroke-width="0.85"/><circle cx="4.5" cy="2.6" r="0.45" fill="#555"/></svg>
<svg style="left:1107.50px;top:533.70px" width="13" height="13" viewBox="0 0 13 13"><path d="M3.1 3.8 V1.1 H9.9 V3.8" fill="none" stroke="#c4c4c4" stroke-width="0.95"/><rect x="1" y="4" width="11" height="6.1" rx="1.2" fill="none" stroke="#c4c4c4" stroke-width="0.95"/><rect x="3.1" y="9.1" width="6.8" height="2.7" rx="0.9" fill="#fff" stroke="#c4c4c4" stroke-width="0.95"/><circle cx="3" cy="5.8" r="0.55" fill="#c4c4c4"/></svg>
<svg style="left:1129.40px;top:533.70px" width="13" height="13" viewBox="0 0 13 13"><path d="M1.4 11 L3.3 3.3 Q3.6 2.1 4.8 1.9 L6 1.8 L10.5 5.6 L10.2 7.4 Q10 8.2 9 8.7 Z" fill="none" stroke="#c4c4c4" stroke-width="0.95" stroke-linejoin="round"/><path d="M1.6 10.8 L4.9 7.3" stroke="#c4c4c4" stroke-width="0.76"/><circle cx="5.5" cy="6.7" r="0.8" fill="#c4c4c4"/><path d="M8.7 -0.2 L12.4 3.7" stroke="#c4c4c4" stroke-width="0.95"/></svg>
<svg style="left:1151.20px;top:533.70px" width="13" height="13" viewBox="0 0 13 13"><path d="M11.9 4.6 V0.9 H3.5 L0.7 3.7 V12.1 H11.9 V9.4" fill="none" stroke="#222" stroke-width="1.05" stroke-linejoin="round"/><path d="M0.7 3.7 L3.5 0.9 V3.7 Z" fill="#222" stroke="#222" stroke-width="0.5"/><path d="M6.5 10.6 L12.6 4.9" stroke="#222" stroke-width="1.05"/></svg>
<svg style="left:1172.00px;top:533.70px" width="13" height="13" viewBox="0 0 13 13"><path d="M6.5 0.6 V9" stroke="#222" stroke-width="1.2"/><path d="M1.6 3.9 L6.5 8.9 L11.4 3.9" fill="none" stroke="#222" stroke-width="1.2"/><path d="M1 11.8 H12" stroke="#222" stroke-width="1.3499999999999999"/></svg>
<svg style="left:1193.50px;top:533.70px" width="13" height="13" viewBox="0 0 13 13"><g transform="rotate(45 6.5 6.5)"><path d="M9.5 3.8 V9 A3 3 0 0 1 3.5 9 V3 A2 2 0 0 1 7.5 3 V9 A1 1 0 0 1 5.5 9 V4.2" fill="none" stroke="#222" stroke-width="0.96" stroke-linecap="round"/></g></svg>
<svg style="left:1215.05px;top:533.70px" width="13" height="13" viewBox="0 0 13 13"><path d="M0.3 6.5 C2 0.1 11 0.1 12.7 6.5 C11 12.9 2 12.9 0.3 6.5 Z" fill="none" stroke="#222" stroke-width="1.2"/><circle cx="6.5" cy="6.5" r="2.25" fill="none" stroke="#222" stroke-width="1.14"/></svg>
<svg style="left:1236.80px;top:533.70px" width="13" height="13" viewBox="0 0 13 13"><circle cx="6.5" cy="6.5" r="5.6" fill="none" stroke="#222" stroke-width="1.2"/><path d="M4.4 4.4 L8.6 8.6 M8.6 4.4 L4.4 8.6" stroke="#222" stroke-width="1.3"/></svg>
<div class="a" style="left:154px;top:578.9px;width:1113px;height:1px;background:#e6e6e6"></div>
<div class="t" style="left:166.5px;top:556.60px;font-size:8px;font-weight:normal;color:#3c3c3c;transform:scaleX(0.94);transform-origin:0 50%;-webkit-text-stroke:0.15px #3c3c3c;">Final</div>
<div class="t" style="left:254px;top:556.60px;font-size:8px;font-weight:normal;color:#3c3c3c;transform:scaleX(0.94);transform-origin:0 50%;-webkit-text-stroke:0.15px #3c3c3c;">Final</div>
<div class="t" style="left:346.6px;top:556.60px;font-size:8px;font-weight:normal;color:#3c3c3c;transform:scaleX(0.94);transform-origin:0 50%;-webkit-text-stroke:0.15px #3c3c3c;">4<span style="display:inline-block;width:3.9px;height:3.6px;border:0.8px solid #555;border-radius:50%;vertical-align:2.3px;margin:0 0.2px 0 0.5px"></span> de Educación Primaria</div>
<div class="t" style="left:441.3px;top:556.60px;font-size:8px;font-weight:normal;color:#3c3c3c;transform:scaleX(0.9);transform-origin:0 50%;-webkit-text-stroke:0.15px #3c3c3c;">EP4B</div>
<div class="t" style="left:722px;top:556.60px;font-size:8px;font-weight:normal;color:#3c3c3c;-webkit-text-stroke:0.15px #3c3c3c;">26/06/2023</div>
<svg style="left:762.3px;top:562.4px" width="9" height="8" viewBox="0 0 9 8"><path d="M4.5 0.5 L8.6 7.5 H0.4 Z" fill="#f2a72b" stroke="#f2a72b" stroke-width="0.7" stroke-linejoin="round"/><path d="M4.5 2.9 V5.1" stroke="#fff" stroke-width="0.8"/><circle cx="4.5" cy="6.2" r="0.4" fill="#fff"/></svg>
<div class="t" style="left:818px;top:556.60px;font-size:8px;font-weight:normal;color:#3c3c3c;transform:scaleX(0.94);transform-origin:0 50%;-webkit-text-stroke:0.15px #3c3c3c;">Pendiente</div>
<div class="t" style="left:913px;top:556.60px;font-size:8px;font-weight:normal;color:#3c3c3c;transform:scaleX(0.94);transform-origin:0 50%;-webkit-text-stroke:0.15px #3c3c3c;">Acta de Primaria LOMCE</div>
<div class="t" style="left:1008.3px;top:556.90px;font-size:8px;font-weight:normal;color:#3c3c3c;-webkit-text-stroke:0.15px #3c3c3c;">0</div>
<svg style="left:1016.9px;top:562.0px" width="9" height="9" viewBox="0 0 9 9"><circle cx="4.5" cy="4.5" r="3.8" fill="none" stroke="#555" stroke-width="0.85"/><path d="M4.5 3.9 V6.6" stroke="#555" stroke-width="0.85"/><circle cx="4.5" cy="2.6" r="0.45" fill="#555"/></svg>
<svg style="left:1107.50px;top:559.50px" width="13" height="13" viewBox="0 0 13 13"><path d="M3.1 3.8 V1.1 H9.9 V3.8" fill="none" stroke="#c4c4c4" stroke-width="0.95"/><rect x="1" y="4" width="11" height="6.1" rx="1.2" fill="none" stroke="#c4c4c4" stroke-width="0.95"/><rect x="3.1" y="9.1" width="6.8" height="2.7" rx="0.9" fill="#fff" stroke="#c4c4c4" stroke-width="0.95"/><circle cx="3" cy="5.8" r="0.55" fill="#c4c4c4"/></svg>
<svg style="left:1129.40px;top:559.50px" width="13" height="13" viewBox="0 0 13 13"><path d="M1.4 11 L3.3 3.3 Q3.6 2.1 4.8 1.9 L6 1.8 L10.5 5.6 L10.2 7.4 Q10 8.2 9 8.7 Z" fill="none" stroke="#c4c4c4" stroke-width="0.95" stroke-linejoin="round"/><path d="M1.6 10.8 L4.9 7.3" stroke="#c4c4c4" stroke-width="0.76"/><circle cx="5.5" cy="6.7" r="0.8" fill="#c4c4c4"/><path d="M8.7 -0.2 L12.4 3.7" stroke="#c4c4c4" stroke-width="0.95"/></svg>
<svg style="left:1151.20px;top:559.50px" width="13" height="13" viewBox="0 0 13 13"><path d="M11.9 4.6 V0.9 H3.5 L0.7 3.7 V12.1 H11.9 V9.4" fill="none" stroke="#c4c4c4" stroke-width="0.95" stroke-linejoin="round"/><path d="M0.7 3.7 L3.5 0.9 V3.7 Z" fill="#c4c4c4" stroke="#c4c4c4" stroke-width="0.5"/><path d="M6.5 10.6 L12.6 4.9" stroke="#c4c4c4" stroke-width="0.95"/></svg>
<svg style="left:1172.00px;top:559.50px" width="13" height="13" viewBox="0 0 13 13"><path d="M6.5 0.6 V9" stroke="#c4c4c4" stroke-width="0.95"/><path d="M1.6 3.9 L6.5 8.9 L11.4 3.9" fill="none" stroke="#c4c4c4" stroke-width="0.95"/><path d="M1 11.8 H12" stroke="#c4c4c4" stroke-width="1.0999999999999999"/></svg>
<svg style="left:1193.50px;top:559.50px" width="13" height="13" viewBox="0 0 13 13"><g transform="rotate(45 6.5 6.5)"><path d="M9.5 3.8 V9 A3 3 0 0 1 3.5 9 V3 A2 2 0 0 1 7.5 3 V9 A1 1 0 0 1 5.5 9 V4.2" fill="none" stroke="#c4c4c4" stroke-width="0.76" stroke-linecap="round"/></g></svg>
<svg style="left:1215.05px;top:559.50px" width="13" height="13" viewBox="0 0 13 13"><path d="M0.3 6.5 C2 0.1 11 0.1 12.7 6.5 C11 12.9 2 12.9 0.3 6.5 Z" fill="none" stroke="#c4c4c4" stroke-width="0.95"/><circle cx="6.5" cy="6.5" r="2.25" fill="none" stroke="#c4c4c4" stroke-width="0.9025"/></svg>
<svg style="left:1236.80px;top:559.50px" width="13" height="13" viewBox="0 0 13 13"><circle cx="6.5" cy="6.5" r="5.6" fill="none" stroke="#c4c4c4" stroke-width="0.95"/><path d="M4.4 4.4 L8.6 8.6 M8.6 4.4 L4.4 8.6" stroke="#c4c4c4" stroke-width="1.05"/></svg>
<div class="a" style="left:154px;top:607.4px;width:1113px;height:1px;background:#e6e6e6"></div>
<div class="t" style="left:166.5px;top:583.75px;font-size:8px;font-weight:normal;color:#3c3c3c;transform:scaleX(0.94);transform-origin:0 50%;-webkit-text-stroke:0.15px #3c3c3c;">Final</div>
<div class="t" style="left:254px;top:583.75px;font-size:8px;font-weight:normal;color:#3c3c3c;transform:scaleX(0.94);transform-origin:0 50%;-webkit-text-stroke:0.15px #3c3c3c;">Final</div>
<div class="t" style="left:346.6px;top:584.5px;line-height:9.1px;font-size:8px;color:#3c3c3c;-webkit-text-stroke:0.15px #3c3c3c;transform:scaleX(0.94);transform-origin:0 50%">5<span style="display:inline-block;width:3.9px;height:3.6px;border:0.8px solid #555;border-radius:50%;vertical-align:2.3px;margin:0 0.2px 0 0.5px"></span> de Educación Primaria<br>(LOMLOE)</div>
<div class="t" style="left:441.3px;top:583.75px;font-size:8px;font-weight:normal;color:#3c3c3c;transform:scaleX(0.9);transform-origin:0 50%;-webkit-text-stroke:0.15px #3c3c3c;">EP5A</div>
<div class="t" style="left:722px;top:583.75px;font-size:8px;font-weight:normal;color:#3c3c3c;-webkit-text-stroke:0.15px #3c3c3c;">26/04/2023</div>
<div class="t" style="left:818px;top:583.75px;font-size:8px;font-weight:normal;color:#3c3c3c;transform:scaleX(0.94);transform-origin:0 50%;-webkit-text-stroke:0.15px #3c3c3c;">Anulada</div>
<div class="t" style="left:913px;top:579.3px;line-height:9.3px;font-size:8px;color:#3c3c3c;-webkit-text-stroke:0.15px #3c3c3c;transform:scaleX(0.94);transform-origin:0 50%">Acta de evaluación para<br>cursos impares de Primaria<br>LOMLOE</div>
<div class="t" style="left:1008.3px;top:584.05px;font-size:8px;font-weight:normal;color:#3c3c3c;-webkit-text-stroke:0.15px #3c3c3c;">0</div>
<svg style="left:1016.9px;top:589.1px" width="9" height="9" viewBox="0 0 9 9"><circle cx="4.5" cy="4.5" r="3.8" fill="none" stroke="#555" stroke-width="0.85"/><path d="M4.5 3.9 V6.6" stroke="#555" stroke-width="0.85"/><circle cx="4.5" cy="2.6" r="0.45" fill="#555"/></svg>
<svg style="left:1107.50px;top:586.65px" width="13" height="13" viewBox="0 0 13 13"><path d="M3.1 3.8 V1.1 H9.9 V3.8" fill="none" stroke="#222" stroke-width="1.2"/><rect x="1" y="4" width="11" height="6.1" rx="1.2" fill="none" stroke="#222" stroke-width="1.2"/><rect x="3.1" y="9.1" width="6.8" height="2.7" rx="0.9" fill="#fff" stroke="#222" stroke-width="1.2"/><circle cx="3" cy="5.8" r="0.55" fill="#222"/></svg>
<svg style="left:1129.40px;top:586.65px" width="13" height="13" viewBox="0 0 13 13"><path d="M1.4 11 L3.3 3.3 Q3.6 2.1 4.8 1.9 L6 1.8 L10.5 5.6 L10.2 7.4 Q10 8.2 9 8.7 Z" fill="none" stroke="#c4c4c4" stroke-width="0.95" stroke-linejoin="round"/><path d="M1.6 10.8 L4.9 7.3" stroke="#c4c4c4" stroke-width="0.76"/><circle cx="5.5" cy="6.7" r="0.8" fill="#c4c4c4"/><path d="M8.7 -0.2 L12.4 3.7" stroke="#c4c4c4" stroke-width="0.95"/></svg>
<svg style="left:1151.20px;top:586.65px" width="13" height="13" viewBox="0 0 13 13"><path d="M11.9 4.6 V0.9 H3.5 L0.7 3.7 V12.1 H11.9 V9.4" fill="none" stroke="#c4c4c4" stroke-width="0.95" stroke-linejoin="round"/><path d="M0.7 3.7 L3.5 0.9 V3.7 Z" fill="#c4c4c4" stroke="#c4c4c4" stroke-width="0.5"/><path d="M6.5 10.6 L12.6 4.9" stroke="#c4c4c4" stroke-width="0.95"/></svg>
<svg style="left:1172.00px;top:586.65px" width="13" height="13" viewBox="0 0 13 13"><path d="M6.5 0.6 V9" stroke="#c4c4c4" stroke-width="0.95"/><path d="M1.6 3.9 L6.5 8.9 L11.4 3.9" fill="none" stroke="#c4c4c4" stroke-width="0.95"/><path d="M1 11.8 H12" stroke="#c4c4c4" stroke-width="1.0999999999999999"/></svg>
<svg style="left:1193.50px;top:586.65px" width="13" height="13" viewBox="0 0 13 13"><g transform="rotate(45 6.5 6.5)"><path d="M9.5 3.8 V9 A3 3 0 0 1 3.5 9 V3 A2 2 0 0 1 7.5 3 V9 A1 1 0 0 1 5.5 9 V4.2" fill="none" stroke="#c4c4c4" stroke-width="0.76" stroke-linecap="round"/></g></svg>
<svg style="left:1215.05px;top:586.65px" width="13" height="13" viewBox="0 0 13 13"><path d="M0.3 6.5 C2 0.1 11 0.1 12.7 6.5 C11 12.9 2 12.9 0.3 6.5 Z" fill="none" stroke="#222" stroke-width="1.2"/><circle cx="6.5" cy="6.5" r="2.25" fill="none" stroke="#222" stroke-width="1.14"/></svg>
<svg style="left:1236.80px;top:586.65px" width="13" height="13" viewBox="0 0 13 13"><circle cx="6.5" cy="6.5" r="5.6" fill="none" stroke="#222" stroke-width="1.2"/><path d="M4.4 4.4 L8.6 8.6 M8.6 4.4 L4.4 8.6" stroke="#222" stroke-width="1.3"/></svg>
<div class="a" style="left:154px;top:636.3px;width:1113px;height:1px;background:#e6e6e6"></div>
<div class="t" style="left:166.5px;top:612.45px;font-size:8px;font-weight:normal;color:#3c3c3c;transform:scaleX(0.94);transform-origin:0 50%;-webkit-text-stroke:0.15px #3c3c3c;">Final</div>
<div class="t" style="left:254px;top:612.45px;font-size:8px;font-weight:normal;color:#3c3c3c;transform:scaleX(0.94);transform-origin:0 50%;-webkit-text-stroke:0.15px #3c3c3c;">Final</div>
<div class="t" style="left:346.6px;top:613.2px;line-height:9.1px;font-size:8px;color:#3c3c3c;-webkit-text-stroke:0.15px #3c3c3c;transform:scaleX(0.94);transform-origin:0 50%">5<span style="display:inline-block;width:3.9px;height:3.6px;border:0.8px solid #555;border-radius:50%;vertical-align:2.3px;margin:0 0.2px 0 0.5px"></span> de Educación Primaria<br>(LOMLOE)</div>
<div class="t" style="left:441.3px;top:612.45px;font-size:8px;font-weight:normal;color:#3c3c3c;transform:scaleX(0.9);transform-origin:0 50%;-webkit-text-stroke:0.15px #3c3c3c;">EP5B</div>
<div class="t" style="left:722px;top:612.45px;font-size:8px;font-weight:normal;color:#3c3c3c;-webkit-text-stroke:0.15px #3c3c3c;">26/06/2023</div>
<div class="t" style="left:818px;top:612.45px;font-size:8px;font-weight:normal;color:#3c3c3c;transform:scaleX(0.94);transform-origin:0 50%;-webkit-text-stroke:0.15px #3c3c3c;">Firmada</div>
<div class="t" style="left:913px;top:608.0px;line-height:9.3px;font-size:8px;color:#3c3c3c;-webkit-text-stroke:0.15px #3c3c3c;transform:scaleX(0.94);transform-origin:0 50%">Acta de evaluación para<br>cursos impares de Primaria<br>LOMLOE</div>
<div class="t" style="left:1008.3px;top:612.75px;font-size:8px;font-weight:normal;color:#3c3c3c;-webkit-text-stroke:0.15px #3c3c3c;">0</div>
<svg style="left:1016.9px;top:617.8px" width="9" height="9" viewBox="0 0 9 9"><circle cx="4.5" cy="4.5" r="3.8" fill="none" stroke="#555" stroke-width="0.85"/><path d="M4.5 3.9 V6.6" stroke="#555" stroke-width="0.85"/><circle cx="4.5" cy="2.6" r="0.45" fill="#555"/></svg>
<svg style="left:1107.50px;top:615.35px" width="13" height="13" viewBox="0 0 13 13"><path d="M3.1 3.8 V1.1 H9.9 V3.8" fill="none" stroke="#c4c4c4" stroke-width="0.95"/><rect x="1" y="4" width="11" height="6.1" rx="1.2" fill="none" stroke="#c4c4c4" stroke-width="0.95"/><rect x="3.1" y="9.1" width="6.8" height="2.7" rx="0.9" fill="#fff" stroke="#c4c4c4" stroke-width="0.95"/><circle cx="3" cy="5.8" r="0.55" fill="#c4c4c4"/></svg>
<svg style="left:1129.40px;top:615.35px" width="13" height="13" viewBox="0 0 13 13"><path d="M1.4 11 L3.3 3.3 Q3.6 2.1 4.8 1.9 L6 1.8 L10.5 5.6 L10.2 7.4 Q10 8.2 9 8.7 Z" fill="none" stroke="#c4c4c4" stroke-width="0.95" stroke-linejoin="round"/><path d="M1.6 10.8 L4.9 7.3" stroke="#c4c4c4" stroke-width="0.76"/><circle cx="5.5" cy="6.7" r="0.8" fill="#c4c4c4"/><path d="M8.7 -0.2 L12.4 3.7" stroke="#c4c4c4" stroke-width="0.95"/></svg>
<svg style="left:1151.20px;top:615.35px" width="13" height="13" viewBox="0 0 13 13"><path d="M11.9 4.6 V0.9 H3.5 L0.7 3.7 V12.1 H11.9 V9.4" fill="none" stroke="#222" stroke-width="1.05" stroke-linejoin="round"/><path d="M0.7 3.7 L3.5 0.9 V3.7 Z" fill="#222" stroke="#222" stroke-width="0.5"/><path d="M6.5 10.6 L12.6 4.9" stroke="#222" stroke-width="1.05"/></svg>
<svg style="left:1172.00px;top:615.35px" width="13" height="13" viewBox="0 0 13 13"><path d="M6.5 0.6 V9" stroke="#222" stroke-width="1.2"/><path d="M1.6 3.9 L6.5 8.9 L11.4 3.9" fill="none" stroke="#222" stroke-width="1.2"/><path d="M1 11.8 H12" stroke="#222" stroke-width="1.3499999999999999"/></svg>
<svg style="left:1193.50px;top:615.35px" width="13" height="13" viewBox="0 0 13 13"><g transform="rotate(45 6.5 6.5)"><path d="M9.5 3.8 V9 A3 3 0 0 1 3.5 9 V3 A2 2 0 0 1 7.5 3 V9 A1 1 0 0 1 5.5 9 V4.2" fill="none" stroke="#222" stroke-width="0.96" stroke-linecap="round"/></g></svg>
<svg style="left:1215.05px;top:615.35px" width="13" height="13" viewBox="0 0 13 13"><path d="M0.3 6.5 C2 0.1 11 0.1 12.7 6.5 C11 12.9 2 12.9 0.3 6.5 Z" fill="none" stroke="#222" stroke-width="1.2"/><circle cx="6.5" cy="6.5" r="2.25" fill="none" stroke="#222" stroke-width="1.14"/></svg>
<svg style="left:1236.80px;top:615.35px" width="13" height="13" viewBox="0 0 13 13"><circle cx="6.5" cy="6.5" r="5.6" fill="none" stroke="#222" stroke-width="1.2"/><path d="M4.4 4.4 L8.6 8.6 M8.6 4.4 L4.4 8.6" stroke="#222" stroke-width="1.3"/></svg>
<div class="a" style="left:151px;top:468px;width:1117px;height:30px;border:2px solid #e3000f"></div>
<div class="a" style="left:1213px;top:468px;width:18.5px;height:30px;border:2px solid #e3000f"></div>
<svg style="left:0;top:0" width="1312" height="667" viewBox="0 0 1312 667">
<path d="M1209.5 384.5 H1233.3 V421 H1245.5 L1221.5 456.2 L1197.5 421 H1209.5 Z" fill="#fff" stroke="#e3000f" stroke-width="2.8" stroke-linejoin="round"/>
</svg>
<div class="a" style="left:1157px;top:642px;width:45px;height:19.5px;border:1px solid #e3e5f3;border-radius:4px"></div>
<div class="t" style="left:1157px;width:45px;text-align:center;top:642.4px;font-size:6.4px;color:#333">1 - 10 de 36</div>
<svg style="left:1227px;top:648px" width="6" height="9" viewBox="0 0 6 9"><path d="M4.4 1.1 L1.6 4.6 L4.4 8.1" fill="none" stroke="#c2c2c2" stroke-width="1.1"/></svg>
<svg style="left:1249px;top:648px" width="6" height="9" viewBox="0 0 6 9"><path d="M1.6 1.1 L4.4 4.6 L1.6 8.1" fill="none" stroke="#444" stroke-width="1.25"/></svg>
</body></html>
